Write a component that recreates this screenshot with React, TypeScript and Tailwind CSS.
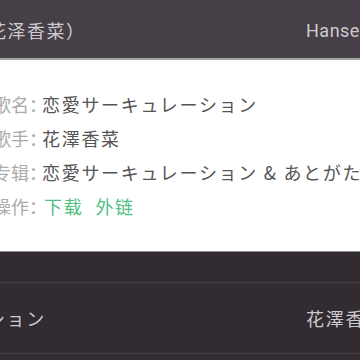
const font = { fontFamily: '"Noto Sans CJK SC", "Noto Sans", sans-serif' }

const rows = [
  { label: '歌名：', value: '恋愛サーキュレーション' },
  { label: '歌手：', value: '花澤香菜' },
  { label: '专辑：', value: '恋愛サーキュレーション & あとがたり' },
]

export default function App() {
  return (
    <div className="w-[360px] h-[360px] overflow-hidden bg-[#322b32]" style={font}>
      {/* header row behind the dialog */}
      <div className="h-[58px] pt-[3px] bg-[#463f47] flex items-center justify-between overflow-hidden whitespace-nowrap">
        <span className="ml-[-12px] text-[18px] text-[#cfcacf] tracking-[1.5px]">花泽香菜）</span>
        <span className="w-[54px] shrink-0 text-[18px] text-[#cfcacf] tracking-[0.5px] font-['Roboto',sans-serif]">Hansel</span>
      </div>
      <div className="h-[2px] bg-[#a6a3a6]" />

      {/* info card */}
      <div className="h-[191px] bg-white pt-[27px] overflow-hidden whitespace-nowrap">
        {rows.map((r) => (
          <div key={r.label} className="h-[34px] flex items-center text-[18px]">
            <span className="w-[49px] ml-[-7px] shrink-0 text-[#ababab]">{r.label}</span>
            <span className="text-[#555555] tracking-[1.7px]">{r.value}</span>
          </div>
        ))}
        <div className="h-[34px] flex items-center text-[18px]">
          <span className="w-[49px] ml-[-7px] shrink-0 text-[#ababab]">操作：</span>
          <span className="ml-[2px] text-[#4fc07f] tracking-[1.7px]">下载</span>
          <span className="ml-[12px] text-[#4fc07f] tracking-[1.7px]">外链</span>
        </div>
      </div>
      <div className="h-[1px] bg-[#8d898d]" />

      {/* list behind */}
      <div className="h-[30px]" />
      <div className="h-[1px] bg-[#453e45]" />
      <div className="h-[70px] flex items-center justify-between whitespace-nowrap overflow-hidden text-[18px] text-[#cfcacf]">
        <span className="ml-[-170px] tracking-[1.7px]">恋愛サーキュレーション</span>
        <span className="w-[54px] shrink-0 tracking-[1.7px]">花澤香菜</span>
      </div>
      <div className="h-[1px] bg-[#453e45]" />
    </div>
  )
}
